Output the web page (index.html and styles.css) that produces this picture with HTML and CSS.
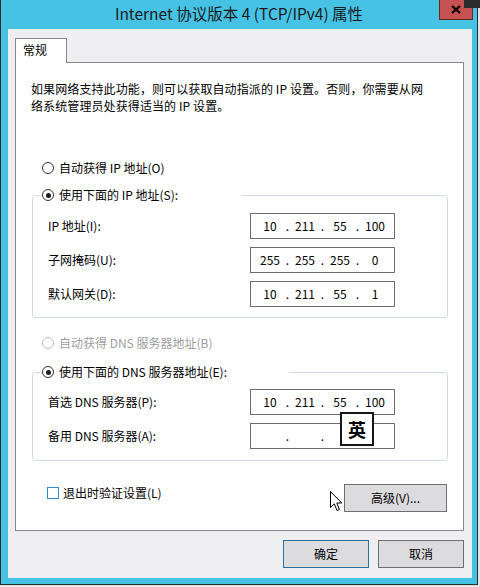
FILE: index.html
```html
<!DOCTYPE html>
<html lang="zh-CN">
<head>
<meta charset="utf-8">
<title>Internet 协议版本 4 (TCP/IPv4) 属性</title>
<link rel="stylesheet" href="styles.css">
</head>
<body>
<div class="screen">
  <div class="window">
    <div class="titlebar"><span class="title">Internet 协议版本 4 (TCP/IPv4) 属性</span></div>
    <div class="close">
      <svg width="10" height="9" viewBox="0 0 10 9"><path d="M1 1 L9 8 M9 1 L1 8" stroke="#000" stroke-width="2.2" fill="none"/></svg>
    </div>
    <div class="client">
      <div class="tabs"><div class="tab">常规</div></div>
      <div class="panel">
        <p class="desc">如果网络支持此功能，则可以获取自动指派的 IP 设置。否则，你需要从网<br>络系统管理员处获得适当的 IP 设置。</p>

        <div class="radio-row r-ip-auto"><span class="radio"></span><span>自动获得 IP 地址(O)</span></div>

        <fieldset class="group g-ip">
          <legend class="legend l-ip"><span class="legend-in"><span class="radio checked"></span><span>使用下面的 IP 地址(S):</span></span></legend>
          <div class="rows">
            <div class="row">
              <span class="label">IP 地址(I):</span>
              <div class="ipbox"><span>10</span><span>.</span><span>211</span><span>.</span><span>55</span><span>.</span><span>100</span></div>
            </div>
            <div class="row">
              <span class="label">子网掩码(U):</span>
              <div class="ipbox"><span>255</span><span>.</span><span>255</span><span>.</span><span>255</span><span>.</span><span>0</span></div>
            </div>
            <div class="row">
              <span class="label">默认网关(D):</span>
              <div class="ipbox"><span>10</span><span>.</span><span>211</span><span>.</span><span>55</span><span>.</span><span>1</span></div>
            </div>
          </div>
        </fieldset>

        <div class="radio-row r-dns-auto disabled"><span class="radio"></span><span>自动获得 DNS 服务器地址(B)</span></div>

        <fieldset class="group g-dns">
          <legend class="legend l-dns"><span class="legend-in"><span class="radio checked"></span><span>使用下面的 DNS 服务器地址(E):</span></span></legend>
          <div class="rows rows-dns">
            <div class="row">
              <span class="label">首选 DNS 服务器(P):</span>
              <div class="ipbox"><span>10</span><span>.</span><span>211</span><span>.</span><span>55</span><span>.</span><span>100</span></div>
            </div>
            <div class="row">
              <span class="label">备用 DNS 服务器(A):</span>
              <div class="ipbox"><span></span><span>.</span><span></span><span>.</span><span></span><span></span><span></span></div>
            </div>
          </div>
        </fieldset>

        <div class="check-row">
          <label class="check"><span class="box"></span><span>退出时验证设置(L)</span></label>
          <button class="btn btn-adv">高级(V)...</button>
        </div>
      </div>
      <div class="actions">
        <button class="btn btn-default">确定</button>
        <button class="btn">取消</button>
      </div>
    </div>
    <div class="ime">英</div>
    <svg class="cursor" width="13" height="21" viewBox="0 0 13 21"><path d="M0.5 0.5 V16.5 L4.3 12.9 L7 19.5 L9.4 18.5 L6.8 12 H11.8 Z" fill="#fff" stroke="#000" stroke-width="1" stroke-linejoin="miter"/></svg>
  </div>
  <div class="corner"></div>
</div>
</body>
</html>
```

FILE: styles.css
```css
* { box-sizing: border-box; }

html, body {
  margin: 0;
  padding: 0;
}

body {
  width: 480px;
  height: 587px;
  overflow: hidden;
  background: #e4e4e4;
  font-family: "Noto Sans CJK SC", "Noto Sans", sans-serif;
  font-size: 12px;
  color: #000;
}

.screen {
  position: relative;
  width: 480px;
  height: 587px;
}

.window {
  position: relative;
  width: 478px;
  height: 585px;
  background: #45c2e4;
  border-left: 1px solid #2b2b2b;
  border-right: 1px solid #2b2b2b;
  border-bottom: 1px solid #2b2b2b;
}

.titlebar {
  height: 29px;
  display: flex;
  justify-content: center;
  align-items: flex-start;
  padding-top: 4px;
}

.title {
  font-size: 15.5px;
  line-height: 18px;
  color: #1b1b1b;
  white-space: nowrap;
}

.close {
  position: absolute;
  left: 438px;
  top: 0;
  width: 34px;
  height: 20px;
  background: #c75050;
  border: 1px solid #5e2b2b;
  border-top: none;
  display: flex;
  align-items: center;
  justify-content: center;
}

.corner {
  position: absolute;
  left: 464px;
  top: 0;
  width: 16px;
  height: 8px;
  background: #2b2b2b;
}

.client {
  margin-left: 7px;
  width: 464px;
  height: 549px;
  background: #efeef1;
  padding: 9px 8px 10px 7px;
  display: flex;
  flex-direction: column;
}

.tabs {
  display: flex;
  z-index: 1;
}

.tab {
  width: 52px;
  height: 25px;
  margin-bottom: -1px;
  background: #fff;
  border: 1px solid #898989;
  border-bottom: none;
  padding: 2px 0 0 7px;
  line-height: 18px;
}

.panel {
  height: 469px;
  background: #fff;
  border: 1px solid #898989;
  padding: 17px 15px 0 15px;
}

.desc {
  margin: 0;
  line-height: 17px;
  letter-spacing: 0.1px;
  white-space: nowrap;
}

.radio-row {
  display: flex;
  align-items: center;
  gap: 5px;
  height: 18px;
  margin-left: 11px;
  line-height: 18px;
  white-space: nowrap;
}

.r-ip-auto { margin-top: 45px; }
.r-dns-auto { margin-top: 16px; }

.radio {
  flex: none;
  width: 12px;
  height: 12px;
  border-radius: 50%;
  border: 1px solid #333;
  background: #fff;
  display: grid;
  place-items: center;
}

.radio.checked::after {
  content: "";
  width: 5px;
  height: 5px;
  border-radius: 50%;
  background: #1a1a1a;
}

.disabled { color: #9d9d9d; }
.disabled .radio { border-color: #bdbdbd; }

.group {
  margin: 0 0 0 1px;
  padding: 9px 0 10px 9px;
  border: 1px solid #d3dae1;
  border-radius: 3px;
  min-inline-size: 0;
}

.g-ip { margin-top: 9px; }
.g-dns { margin-top: 11px; padding-top: 8px; padding-bottom: 11px; }

.legend {
  padding: 0;
  margin: 0;
  height: 18px;
}

.l-ip { width: 200px; }
.l-dns { width: 247px; }

.legend-in {
  display: flex;
  align-items: center;
  gap: 5px;
  height: 18px;
  line-height: 18px;
  white-space: nowrap;
}

.rows {
  display: flex;
  flex-direction: column;
  gap: 8px;
  padding-left: 6px;
}

.row {
  display: grid;
  grid-template-columns: 202px 145px;
  align-items: center;
  height: 26px;
}

.label {
  line-height: 18px;
  white-space: nowrap;
}

.ipbox {
  height: 26px;
  border: 1px solid #6c6c6c;
  background: #fff;
  padding-left: 4px;
  display: grid;
  grid-template-columns: 30px 5px 30px 5px 30px 5px 30px;
  align-items: center;
  text-align: center;
  line-height: 18px;
}

.check-row {
  margin-top: 23px;
  display: flex;
  justify-content: space-between;
  align-items: flex-start;
  padding-left: 16px;
  padding-right: 1px;
}

.check {
  display: flex;
  align-items: center;
  gap: 4px;
  height: 18px;
  line-height: 18px;
  white-space: nowrap;
}

.box {
  width: 12px;
  height: 12px;
  border: 1px solid #2f8ad4;
  background: #fff;
}

.btn {
  font-family: "Noto Sans CJK SC", "Noto Sans", sans-serif;
  font-size: 12px;
  color: #000;
  height: 28px;
  background: #dcdbde;
  border: 1px solid #6f6f6f;
  border-radius: 0;
  padding: 0;
  line-height: 18px;
}

.btn-adv { width: 103px; }

.actions {
  margin-top: 9px;
  display: flex;
  justify-content: flex-end;
  gap: 9px;
}

.actions .btn { width: 86px; }

.btn-default { border-color: #2e6f9e; }

.ime {
  position: absolute;
  left: 339px;
  top: 412px;
  width: 34px;
  height: 34px;
  border: 2px solid #161616;
  background: #fff;
  font-size: 18px;
  font-weight: 700;
  line-height: 30px;
  text-align: center;
}

.cursor {
  position: absolute;
  left: 329px;
  top: 491px;
}
```
